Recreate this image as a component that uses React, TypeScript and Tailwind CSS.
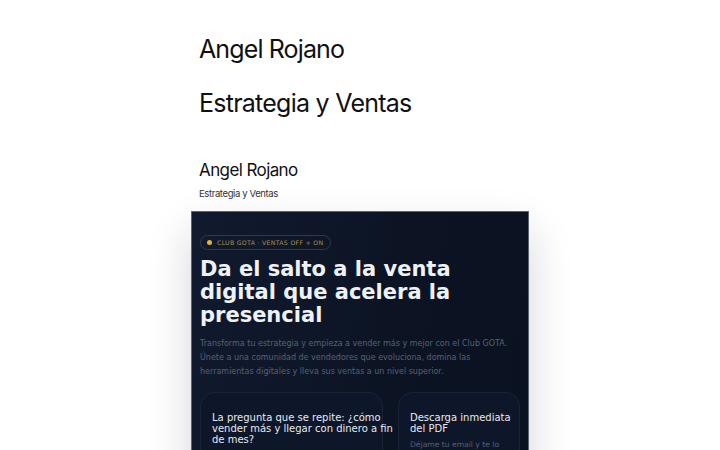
import React from "react";

const heading = { fontFamily: "Inter, 'Noto Sans', sans-serif" };
const dv = { fontFamily: "'DejaVu Sans', sans-serif" };

const Hero = () => {
  return (
    <section
      className="mt-[9px] border border-[#5b6473] bg-[linear-gradient(100deg,#111a2e_0%,#0c1424_55%,#0a1120_100%)] px-2 pt-[16px] pb-10 shadow-[0_20px_40px_rgba(15,23,42,0.18)]"
      style={dv}
    >
      <div className="inline-flex h-[15px] items-center gap-[5px] rounded-full border border-[#3a3a32] pl-[6px] pr-[7px]">
        <span className="h-[5px] w-[5px] rounded-full bg-[#e0b53b]" />
        <span className="text-[6.2px] tracking-[0.05em] text-[#a98f4c] uppercase">
          Club GOTA · Ventas OFF + ON
        </span>
      </div>
      <h1 className="mt-[6px] text-[21px] leading-[23px] font-bold text-[#eef1f6]">
        Da el salto a la venta
        <br />
        digital que acelera la
        <br />
        presencial
      </h1>
      <p className="mt-[10px] text-[8px] leading-[14px] text-[#556176] whitespace-nowrap">
        Transforma tu estrategia y empieza a vender más y mejor con el Club GOTA.
        <br />
        Únete a una comunidad de vendedores que evoluciona, domina las
        <br />
        herramientas digitales y lleva sus ventas a un nivel superior.
      </p>
      <div className="mt-[13px] grid grid-cols-[minmax(0,3fr)_minmax(0,2fr)] gap-[15px]">
        <div className="rounded-[14px] border border-[#18233a] bg-[#0e1729] px-[11px] pt-[19px] pb-6">
          <h3 className="text-[10px] leading-[11px] text-[#e6eaf0] whitespace-nowrap">
            La pregunta que se repite: ¿cómo
            <br />
            vender más y llegar con dinero a fin
            <br />
            de mes?
          </h3>
        </div>
        <div className="rounded-[14px] border border-[#18233a] bg-[#0e1729] px-[11px] pt-[19px] pb-6">
          <h3 className="text-[10px] leading-[11px] text-[#e6eaf0] whitespace-nowrap">
            Descarga inmediata
            <br />
            del PDF
          </h3>
          <p className="mt-[5px] text-[7.6px] leading-[11px] text-[#556176]">
            Déjame tu email y te lo enviaremos al momento.
          </p>
        </div>
      </div>
    </section>
  );
};

export default function App() {
  return (
    <div className="min-h-screen bg-white">
      <div className="mx-auto w-[338px] pt-[33px]">
        <div className="px-2 text-[#111]" style={heading}>
          <h1 className="text-[25px] leading-[32px] font-normal tracking-[-0.035em]">
            Angel Rojano
          </h1>
          <h2 className="mt-[22px] text-[25px] leading-[32px] font-normal tracking-[-0.03em]">
            Estrategia y Ventas
          </h2>
          <h3 className="mt-[39px] text-[17px] leading-[24px] font-normal tracking-[-0.035em]">
            Angel Rojano
          </h3>
          <p className="mt-[4px] text-[9.5px] leading-[16px] tracking-[-0.04em] text-[#333]">
            Estrategia y Ventas
          </p>
        </div>
        <Hero />
      </div>
    </div>
  );
}
